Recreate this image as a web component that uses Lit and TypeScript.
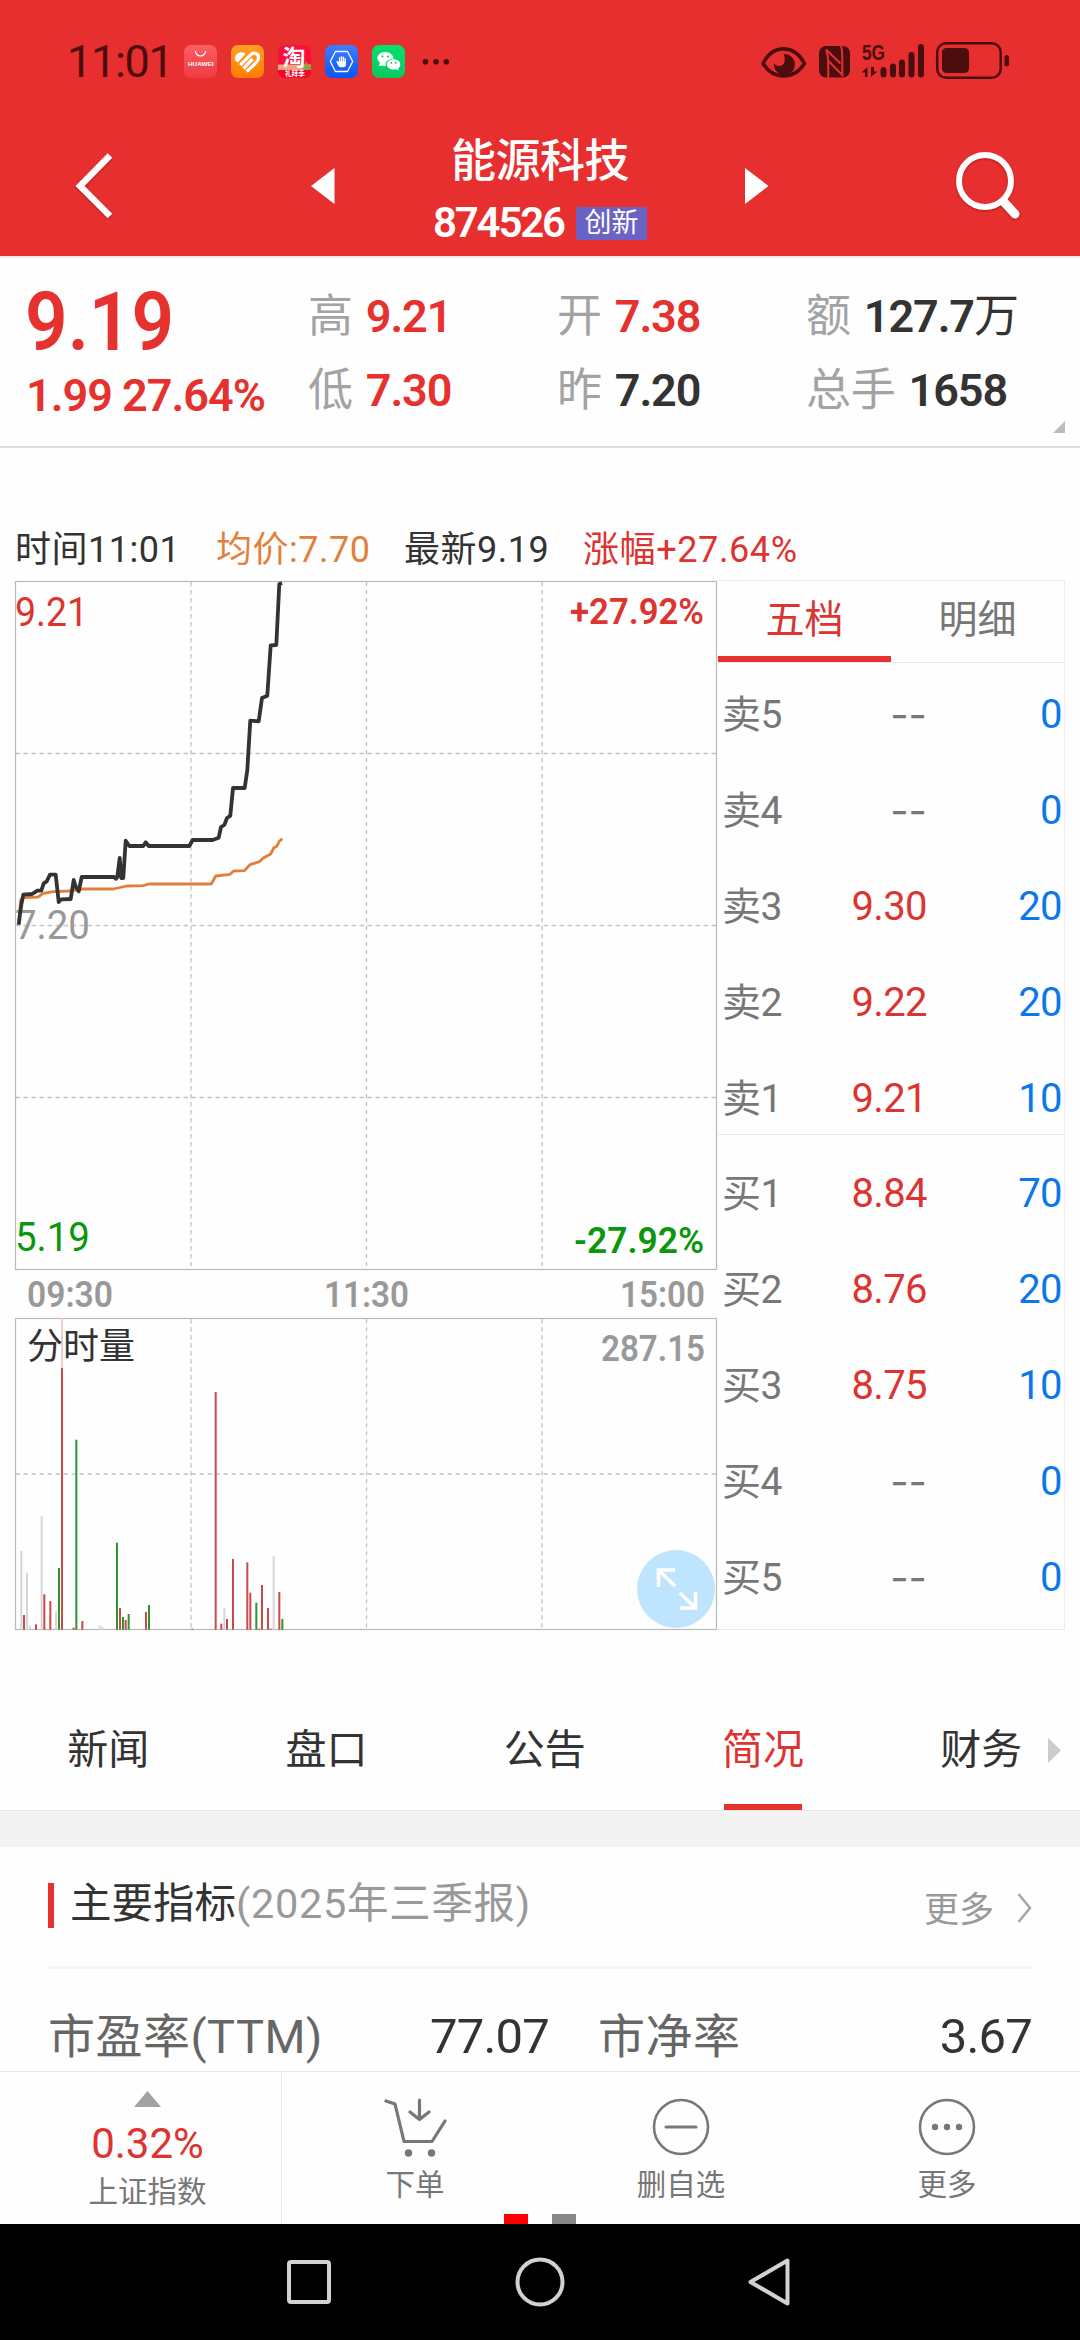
import { LitElement, html, svg, css } from "lit";
import { customElement } from "lit/decorators.js";

const SANS = css`Roboto, "Noto Sans CJK SC", sans-serif`;

type Tone = "up" | "flat" | "down";

/* Minute prices and running average, in thirds of a pixel inside the chart. */
const PRICE: [number, number][] = [
  [56, 1064], [60, 1032], [64, 1004], [70, 974], [96, 972], [104, 967], [112, 962], [124, 962],
  [131, 940], [140, 934], [150, 914], [167, 914], [176, 996], [184, 988], [212, 987], [221, 930],
  [227, 950], [236, 964], [245, 921], [342, 921], [348, 926], [352, 922], [359, 864], [364, 924],
  [370, 924], [377, 812], [388, 828], [430, 828], [437, 817], [446, 828], [568, 828], [578, 810],
  [638, 810], [656, 803], [663, 771], [673, 765], [681, 744], [691, 737], [699, 654], [734, 654],
  [742, 600], [751, 452], [776, 454], [786, 384], [802, 377], [812, 226], [829, 225], [838, 42], [846, 39],
];
const AVERAGE: [number, number][] = [
  [56, 1060], [62, 990], [72, 983], [114, 981], [130, 970], [160, 965], [206, 963], [245, 957],
  [340, 957], [380, 948], [430, 947], [446, 942], [634, 942], [647, 918], [690, 913], [701, 903],
  [733, 902], [750, 884], [778, 875], [790, 864], [812, 852], [821, 834], [830, 829], [838, 814], [847, 806],
];

/* Volume columns: x and top in thirds of a pixel, and tone. */
const VOLUME: [number, number, Tone][] = [
  [64, 1053, "flat"], [72, 1245, "up"], [81, 1118, "flat"], [90, 1277, "flat"], [108, 1273, "up"],
  [125, 948, "flat"], [133, 1183, "up"], [151, 1203, "up"], [168, 1234, "flat"], [177, 1104, "down"],
  [186, 504, "up"], [221, 1283, "up"], [229, 719, "down"], [247, 1263, "up"], [299, 1276, "flat"],
  [307, 1280, "flat"], [351, 1028, "down"], [360, 1224, "up"], [369, 1251, "down"], [377, 1260, "up"],
  [386, 1242, "down"], [438, 1236, "up"], [447, 1215, "down"], [577, 1286, "up"], [647, 576, "up"],
  [664, 1271, "up"], [673, 1224, "flat"], [681, 1257, "up"], [699, 1077, "up"], [742, 1087, "up"],
  [751, 1178, "up"], [769, 1208, "down"], [777, 1286, "up"], [786, 1155, "up"], [804, 1224, "up"],
  [812, 1286, "up"], [821, 1068, "flat"], [838, 1176, "up"], [847, 1257, "down"],
];

const toPoints = (data: [number, number][]) =>
  data.map(([x, y]) => `${(x / 3).toFixed(1)},${(y / 3).toFixed(1)}`).join(" ");

@customElement("phone-status")
class PhoneStatus extends LitElement {
  static styles = css`
    :host { display: flex; height: 83px; padding: 0 70px 0 67px; align-items: flex-end; background: #e72f2f; }
    .time { font: 400 45px/43px ${SANS}; color: #4c0d0e; width: 117px; letter-spacing: -1.3px; white-space: nowrap; }
    .apps { display: flex; gap: 14px; height: 33px; margin-bottom: 5px; flex: 1; }
    .sys { width: 250px; height: 40px; margin-bottom: 2px; flex: none; }
    .cjk { font-family: "Noto Sans CJK SC", sans-serif; font-weight: 700; }
    .latin { font-family: "Liberation Sans", sans-serif; font-weight: 700; }
    svg { display: block; overflow: visible; }
  `;
  render() {
    return html`
      <div class="time">11:01</div>
      <div class="apps">
        <svg width="33" height="33" viewBox="0 0 33 33">
          <defs><linearGradient id="h" x2="0" y2="1"><stop stop-color="#fb5f64" /><stop offset="1" stop-color="#f03a42" /></linearGradient></defs>
          <rect width="33" height="33" rx="7" fill="url(#h)" />
          <path d="M11.500 6a5 5 0 0 0 10 0" fill="none" stroke="#fff" stroke-width="1.200" />
          <text class="latin" x="4" y="21" font-size="5.600" textLength="25.500" lengthAdjust="spacingAndGlyphs" fill="#fff">HUAWEI</text>
        </svg>
        <svg width="33" height="33" viewBox="0 0 33 33">
          <defs><linearGradient id="o" x2="0" y2="1"><stop stop-color="#ffa024" /><stop offset="1" stop-color="#ff7d00" /></linearGradient></defs>
          <rect width="33" height="33" rx="7" fill="url(#o)" />
          <path d="M4.500 16C2.500 11 7 6.500 11 7.500C12.500 7.300 13.800 8 14.500 9L6.800 17.500Z" fill="#fff" />
          <path d="M9.200 20.200L19.500 10C22.500 6.500 28.500 8.500 27.300 14C26.500 17.500 21 21.500 15.800 26.500M12.500 23.500L21.500 14" fill="none" stroke="#fff" stroke-width="3.300" />
        </svg>
        <svg width="33" height="33" viewBox="0 0 33 33">
          <rect width="33" height="33" rx="7" fill="#fb0d3c" />
          <path d="M0 19.500h33v6H0z" fill="#e8a682" /><path d="M25 25l3-9 3 5 2-2v7h-8z" fill="#84a63c" />
          <text class="cjk" x="4.500" y="19.800" font-size="22" textLength="23" lengthAdjust="spacingAndGlyphs" fill="#fff">淘</text>
          <path d="M0 25h33v1a7 7 0 0 1-7 7H7a7 7 0 0 1-7-7z" fill="#f5052c" />
          <text class="cjk" x="7" y="31.300" font-size="6.600" fill="#fff">礼拜季</text>
        </svg>
        <svg width="33" height="33" viewBox="0 0 33 33">
          <defs><linearGradient id="b" x2="0" y2="1"><stop stop-color="#3f7dff" /><stop offset="1" stop-color="#0a55f5" /></linearGradient></defs>
          <rect width="33" height="33" rx="7" fill="url(#b)" />
          <path d="M10.500 6.500h12l5.200 10-5.200 10h-12l-5.200-10z" fill="none" stroke="#fff" stroke-width="1.300" stroke-linejoin="round" />
          <path d="M13.200 20.500l-2-4.300 1.200-.5 1.500 1.700v-5.200h1.300v4h.6v-5h1.400v5h.6v-4.500h1.400v4.500h.5v-3h1.300v6.300c0 1.800-1 2.700-2.600 2.700h-3c-.9 0-1.800-.6-2.200-1.700z" fill="#fff" />
        </svg>
        <svg width="33" height="33" viewBox="0 0 33 33">
          <defs><linearGradient id="w" x2="0" y2="1"><stop stop-color="#05e06e" /><stop offset="1" stop-color="#0bc863" /></linearGradient></defs>
          <rect width="33" height="33" rx="7" fill="url(#w)" />
          <path d="M7 21l.8-3.400C3 14 5.500 7.200 13 7c5 0 8.500 3 8.500 6.500-6 .5-9 4-7.500 7.500-1.500.2-2.500 0-3.500-.5z" fill="#fff" />
          <path d="M21.500 14.200c4 0 6.800 2.300 6.800 5.200 0 1.700-.9 3-2.200 4l.5 2-2.300-1.200c-5 1.300-9.400-1.400-9.400-4.800 0-2.900 2.800-5.200 6.600-5.200z" fill="#fff" />
          <g fill="#0bcf66"><circle cx="10.500" cy="11.500" r="1.100" /><circle cx="16" cy="11.500" r="1.100" /><circle cx="19.300" cy="17.900" r=".9" /><circle cx="23.800" cy="17.900" r=".9" /></g>
        </svg>
        <svg width="33" height="33" viewBox="0 0 33 33" fill="#4c0d0e"><circle cx="6.500" cy="16.700" r="2.800" /><circle cx="17" cy="16.700" r="2.800" /><circle cx="27.300" cy="16.700" r="2.800" /></svg>
      </div>
      <svg class="sys" viewBox="760 41 250 40" fill="#4c0d0e">
        <path d="M763 63.500C773 44 794 44 804.500 63.500C794 80 773 80 763 63.500Z" fill="none" stroke="#4c0d0e" stroke-width="3.600" stroke-linejoin="round" />
        <path d="M784 54a10.500 10.500 0 1 1-10 9c2 4 9 4 10.500-1c.8-3.500-.5-6-.5-8z" />
        <rect x="819" y="46" width="31" height="31.500" rx="7" />
        <path d="M828.300 78V66C828.300 58 828 54 826 49.500L840.500 63.500M841 46C842.500 50 842.300 56 842.300 62V75L829 61.500" fill="none" stroke="#e72f2f" stroke-width="2" />
        <text class="latin" x="862" y="60" font-size="22" textLength="23" lengthAdjust="spacingAndGlyphs">5G</text>
        <path d="M867.500 77V67l-6 5.500h3.500V77zM871 67v10l6.500-5.500H874V67z" />
        <g stroke="#4c0d0e" stroke-width="6" stroke-linecap="round"><path d="M883.500 70v4.500M893 66.500v8M902 62.500v12M911.500 55v19.500M921 47v27.500" /></g>
        <rect x="937.200" y="43.300" width="63.500" height="34.500" rx="9" fill="none" stroke="#4c0d0e" stroke-width="2.500" />
        <rect x="942" y="48" width="27" height="25" rx="4.500" /><rect x="1004.500" y="55" width="4.500" height="11.500" rx="2.200" />
      </svg>`;
  }
}

@customElement("stock-header")
class StockHeader extends LitElement {
  static styles = css`
    :host { display: grid; grid-template-columns: 300px 1fr 300px; height: 173px; background: #e72f2f; color: #fff; font-family: ${SANS}; }
    .side { display: flex; justify-content: space-between; align-items: center; padding-top: 32px; }
    .left { padding-left: 74px; margin-right: -36px; }
    .right { padding-right: 57px; margin-left: -36px; }
    .mid { display: flex; flex-direction: column; align-items: center; padding-top: 52px; }
    .name { font-size: 45px; line-height: 54px; font-weight: 500; letter-spacing: -0.5px; }
    .code { display: flex; align-items: center; gap: 13px; margin-top: 15px; height: 38px; }
    .num { font-size: 42px; font-weight: 600; line-height: 38px; width: 130px; letter-spacing: -2.200px; white-space: nowrap; }
    .tag { width: 71px; height: 33px; border-radius: 3px; background: #6b62c5; font-size: 27px; line-height: 32px; text-align: center; }
    svg { display: block; filter: drop-shadow(0 1px 1px rgba(90, 0, 0, 0.4)); }
    .plain { filter: none; }
  `;
  render() {
    return html`
      <div class="side left">
        <svg width="40" height="68" viewBox="0 0 40 68"><path d="M36 3.500L6 34l30 30" fill="none" stroke="#fff" stroke-width="6.500" /></svg>
        <svg class="plain" width="25" height="36" viewBox="0 0 25 36"><path d="M23.500 0v36L0 18z" fill="#fff" /></svg>
      </div>
      <div class="mid">
        <div class="name">能源科技</div>
        <div class="code"><span class="num">874526</span><span class="tag">创新</span></div>
      </div>
      <div class="side right">
        <svg class="plain" width="25" height="36" viewBox="0 0 25 36"><path d="M1 0v36l23.500-18z" fill="#fff" /></svg>
        <svg width="68" height="70" viewBox="0 0 68 70" fill="none" stroke="#fff"><circle cx="30" cy="30" r="26" stroke-width="6" /><path d="M49 51l11 12" stroke-width="9" stroke-linecap="round" /></svg>
      </div>`;
  }
}

@customElement("quote-panel")
class QuotePanel extends LitElement {
  static styles = css`
    :host { position: relative; display: grid; grid-template-columns: 281px 249px 249px 1fr; box-sizing: border-box; height: 192px; padding: 3px 0 0 27px; border-bottom: 2px solid #dedede; border-top: 2px solid #f0eaea; font-family: ${SANS}; color: #333; white-space: nowrap; }
    .big { font-size: 82px; line-height: 84px; font-weight: 600; color: #e5322e; transform: scaleX(0.910); transform-origin: 0 0; margin-top: 19px; margin-left: -2px; }
    .chg { font-size: 45px; line-height: 52px; font-weight: 600; color: #e5322e; margin: 6px 0 0 -1px; letter-spacing: -1px; }
    .col { padding-top: 19px; }
    .row { display: flex; height: 74px; line-height: 74px; font-size: 45px; gap: 13px; }
    .k { color: #a3a3a3; letter-spacing: -0.2px; }
    .v { font-weight: 600; letter-spacing: -1.1px; }
    .red { color: #e5322e; }
    .cn { font-weight: 400; letter-spacing: 0; }
    .corner { position: absolute; right: 15px; bottom: 13px; width: 12px; height: 12px; background: #bdbdbd; clip-path: polygon(100% 0, 100% 100%, 0 100%); }
  `;
  render() {
    const row = (k: string, v: string, red = false, unit = "") =>
      html`<div class="row"><span class="k">${k}</span><span class="v ${red ? "red" : ""}">${v}<span class="cn">${unit}</span></span></div>`;
    return html`
      <div><div class="big">9.19</div><div class="chg">1.99 27.64%</div></div>
      <div class="col">${row("高", "9.21", true)}${row("低", "7.30", true)}</div>
      <div class="col">${row("开", "7.38", true)}${row("昨", "7.20")}</div>
      <div class="col">${row("额", "127.7", false, "万")}${row("总手", "1658")}</div>
      <div class="corner"></div>`;
  }
}

@customElement("minute-chart")
class MinuteChart extends LitElement {
  static styles = css`
    :host { display: block; width: 718px; height: 1070px; }
    svg { display: block; font-family: ${SANS}; }
    .frame { fill: none; stroke: #b9b9b9; stroke-width: 1.200; }
    .grid { stroke: #c4c4c4; stroke-width: 1.300; stroke-dasharray: 4.500 3.500; fill: none; }
    .price { fill: none; stroke: #333; stroke-width: 3.800; stroke-linejoin: round; }
    .avg { fill: none; stroke: #e07f3a; stroke-width: 2.800; stroke-linejoin: round; }
    .lbl { font-size: 40px; }
    .b { font-size: 36.500px; font-weight: 600; }
    .cn { font-size: 36px; }
    .red { fill: #dc3431; } .green { fill: #0b960b; } .grey { fill: #999; } .dark { fill: #333; }
    .up { fill: #c9494a; } .down { fill: #2f942f; } .flat { fill: #d6d6d6; }
  `;
  render() {
    const bar = ([x, y, tone]: [number, number, Tone]) =>
      svg`<rect class=${tone} x=${(x / 3 - 1).toFixed(2)} y=${(630 + y / 3).toFixed(2)} width="2" height=${((1289 - y) / 3).toFixed(2)} />`;
    const text = (t: string, x: number, y: number, w: number, cls: string) =>
      svg`<text class=${cls} x=${x} y=${y} textLength=${w} lengthAdjust="spacingAndGlyphs">${t}</text>`;
    return html`<svg width="718" height="1070" viewBox="0 0 718 1070">
      <path class="grid" d="M15.500 183.500H717M15.500 355.500H717M15.500 527.500H717M191 12V696M366.500 12V696M542 12V696" />
      <path class="grid" d="M15.500 904H717M191 749V1058M366.500 749V1058M542 749V1058" />
      <rect class="frame" x="15.500" y="11.500" width="701" height="688" />
      <rect class="frame" x="15.500" y="748.500" width="701" height="311" />
      <polyline class="avg" points=${toPoints(AVERAGE)} />
      ${text("9.21", 15, 55.500, 73, "lbl red")} ${text("7.20", 15, 368.500, 75, "lbl grey")} ${text("5.19", 15, 681, 75, "lbl green")}
      <polyline class="price" points=${toPoints(PRICE)} />
      <rect x="61" y="748" width="2" height="50" fill="#eecccc" />
      ${VOLUME.map(bar)}
      ${text("+27.92%", 570, 54, 134, "b red")} ${text("-27.92%", 574, 682.500, 130, "b green")}
      ${text("09:30", 27, 737, 86, "b grey")} ${text("11:30", 324, 737, 85, "b grey")} ${text("15:00", 620, 737, 85, "b grey")}
      ${text("分时量", 27, 789, 108, "cn dark")} ${text("287.15", 601, 791, 104, "b grey")}
      <circle cx="676" cy="1019" r="39" fill="#bfe4fe" />
      <path d="M675 1016L658.500 1000M658.500 1017V1000H675M680 1023L695.500 1038M680 1038H695.500V1022" fill="none" stroke="#fff" stroke-width="3.600" />
    </svg>`;
  }
}

@customElement("order-book")
class OrderBook extends LitElement {
  static styles = css`
    :host { display: block; box-sizing: border-box; width: 347px; height: 1050px; margin-top: 10px; border: 1px solid #ececec; border-left: 0; font-family: ${SANS}; font-size: 40px; color: #777; }
    .tabs { display: grid; grid-template-columns: 173px 1fr; height: 81px; border-bottom: 1px solid #ececec; }
    .tab { text-align: center; line-height: 79px; font-size: 39px; }
    .on { color: #dc3431; box-shadow: inset 0 -6px #e5322e; }
    .side { box-sizing: border-box; }
    .asks { height: 472px; padding-top: 4px; border-bottom: 1px solid #ececec; }
    .bids { padding-top: 11px; }
    .row { display: grid; grid-template-columns: 60px 145px 1fr; height: 96px; line-height: 96px; padding: 0 2px 0 4px; white-space: nowrap; }
    .row span + span { text-align: right; }
    .k { font-size: 39px; letter-spacing: -0.5px; }
    .p { color: #dc3431; letter-spacing: -0.6px; }
    .none { color: #777; font-family: Inter, sans-serif; letter-spacing: 0; }
    .q { color: #0b78ea; letter-spacing: -0.6px; }
  `;
  render() {
    const row = ([k, p, q]: string[]) =>
      html`<div class="row"><span class="k">${k}</span><span class="p ${p === "--" ? "none" : ""}">${p}</span><span class="q">${q}</span></div>`;
    const asks = [["卖5", "--", "0"], ["卖4", "--", "0"], ["卖3", "9.30", "20"], ["卖2", "9.22", "20"], ["卖1", "9.21", "10"]];
    const bids = [["买1", "8.84", "70"], ["买2", "8.76", "20"], ["买3", "8.75", "10"], ["买4", "--", "0"], ["买5", "--", "0"]];
    return html`
      <div class="tabs"><div class="tab on">五档</div><div class="tab">明细</div></div>
      <div class="side asks">${asks.map(row)}</div>
      <div class="side bids">${bids.map(row)}</div>`;
  }
}

@customElement("stock-details")
class StockDetails extends LitElement {
  static styles = css`
    :host { display: block; height: 381px; overflow: hidden; font-family: ${SANS}; color: #333; white-space: nowrap; }
    .tabs { display: flex; height: 120px; margin-right: -10px; position: relative; }
    .tab { width: 218.300px; flex: none; font-size: 41px; line-height: 121px; text-align: center; display: flex; justify-content: center; }
    .tab:first-child { margin-left: -1px; }
    .tab span { height: 120px; }
    .on { color: #dc3431; }
    .on span { box-shadow: inset 0 -6px #e5322e; width: 78px; display: flex; justify-content: center; }
    .next { position: absolute; right: 29px; top: 48px; width: 13px; height: 25px; background: #cbcbcb; clip-path: polygon(0 0, 100% 50%, 0 100%); }
    .band { height: 37px; background: #f3f3f3; box-shadow: inset 0 1px #e6e6e6; }
    .card { padding: 0 48px; }
    .head { display: flex; align-items: center; height: 119px; border-bottom: 3px solid #f4f4f4; }
    .mark { width: 6px; height: 45px; background: #e5322e; margin: 0 16px 2px 0; }
    .title { font-size: 41.500px; flex: 1; line-height: 50px; margin-bottom: 5px; }
    .title i { font-style: normal; color: #999; letter-spacing: 0.7px; }
    .more { font-size: 35px; color: #999; margin: 0 23px 0 0; }
    .metrics { display: grid; grid-template-columns: 501px 1fr; column-gap: 49px; padding-top: 39px; line-height: 58px; }
    .metric { display: flex; justify-content: space-between; font-size: 47px; color: #666; }
    .metric b { font-weight: 400; color: #333; font-size: 49px; letter-spacing: -0.8px; }
    .metric span { letter-spacing: 0.5px; }
  `;
  render() {
    return html`
      <div class="tabs">
        ${["新闻", "盘口", "公告", "简况", "财务"].map((t) => html`<div class="tab ${t === "简况" ? "on" : ""}"><span>${t}</span></div>`)}
        <div class="next"></div>
      </div>
      <div class="band"></div>
      <div class="card">
        <div class="head">
          <div class="mark"></div>
          <div class="title">主要指标<i>(2025年三季报)</i></div>
          <div class="more">更多</div>
          <svg width="15" height="32" viewBox="0 0 15 32"><path d="M1.500 3L13 17 1.500 31" fill="none" stroke="#a6a6a6" stroke-width="2.500" /></svg>
        </div>
        <div class="metrics">
          <div class="metric"><span>市盈率(TTM)</span><b>77.07</b></div>
          <div class="metric"><span>市净率</span><b>3.67</b></div>
        </div>
      </div>`;
  }
}

@customElement("action-bar")
class ActionBar extends LitElement {
  static styles = css`
    :host { position: relative; display: grid; grid-template-columns: 282px 1fr 1fr 1fr; box-sizing: border-box; height: 153px; border-top: 1px solid #e6e6e6; background: #fefefe; font-family: ${SANS}; color: #777; }
    .index { display: flex; flex-direction: column; align-items: center; border-right: 1px solid #e9e9e9; padding: 19px 0 0 14px; }
    .tri { width: 27px; height: 16px; background: #a2a2a2; clip-path: polygon(50% 0, 100% 100%, 0 100%); }
    .pct { font-size: 42px; line-height: 48px; color: #dc3431; margin-top: 13px; letter-spacing: 0; }
    .lbl { font-size: 29.500px; line-height: 36px; }
    .index .lbl { margin-top: 6px; }
    .act { display: flex; flex-direction: column; align-items: center; padding-top: 24px; gap: 9px; }
    svg { display: block; fill: none; stroke: #777; stroke-width: 3; }
    .dot { fill: #777; stroke: none; }
    .page { position: absolute; bottom: 0; width: 24px; height: 10px; background: #888; left: 552px; }
    .cur { left: 504px; background: #fe0000; }
  `;
  render() {
    return html`
      <div class="index"><div class="tri"></div><div class="pct">0.32%</div><div class="lbl">上证指数</div></div>
      <div class="act">
        <svg width="64" height="62" viewBox="0 0 64 62" stroke-linecap="round" stroke-linejoin="round">
          <path d="M3 5l9 3 9 37.500h28L62 25M36.500 4v19M27 16l9.500 7.500L46 16" stroke-width="3.200" />
          <circle class="dot" cx="25.500" cy="57" r="3.700" /><circle class="dot" cx="48.500" cy="57" r="3.700" />
        </svg>
        <div class="lbl">下单</div>
      </div>
      <div class="act">
        <svg width="62" height="62" viewBox="0 0 62 62"><circle cx="31" cy="31" r="27" stroke-width="2.600" /><path d="M16 31h30" stroke-linecap="round" /></svg>
        <div class="lbl">删自选</div>
      </div>
      <div class="act">
        <svg width="62" height="62" viewBox="0 0 62 62"><circle cx="31" cy="31" r="27" stroke-width="2.600" /><g class="dot"><circle cx="19" cy="31" r="3.200" /><circle cx="31" cy="31" r="3.200" /><circle cx="43" cy="31" r="3.200" /></g></svg>
        <div class="lbl">更多</div>
      </div>
      <div class="page cur"></div><div class="page"></div>`;
  }
}

@customElement("app-root")
class AppRoot extends LitElement {
  static styles = css`
    :host { display: block; width: 1080px; height: 2340px; overflow: hidden; background: #fefefe; }
    .info { display: flex; height: 122px; box-sizing: border-box; padding: 80px 0 0 15px; font: 36px/44px ${SANS}; color: #333; white-space: nowrap; }
    .info span { letter-spacing: 0.5px; }
    .w1 { width: 201px; } .w2 { width: 188px; } .w3 { width: 179px; }
    .avg { color: #e2813b; } .info .red { color: #dc3431; letter-spacing: 0.6px; }
    .main { display: flex; margin-bottom: 50px; }
    .keys { display: flex; height: 116px; background: #000; justify-content: center; align-items: center; }
    .keys svg { display: block; fill: none; stroke: #d2d2d2; stroke-width: 4; }
  `;
  render() {
    return html`
      <phone-status></phone-status>
      <stock-header></stock-header>
      <quote-panel></quote-panel>
      <div class="info">
        <span class="w1">时间11:01</span><span class="w2 avg">均价:7.70</span><span class="w3">最新9.19</span><span class="red">涨幅+27.64%</span>
      </div>
      <div class="main"><minute-chart></minute-chart><order-book></order-book></div>
      <stock-details></stock-details>
      <action-bar></action-bar>
      <div class="keys">
        <svg width="520" height="60" viewBox="280 2252 520 60">
          <rect x="289" y="2262" width="40" height="40" rx="2" /><circle cx="540" cy="2282" r="22.500" />
          <path d="M787.500 2260.500L750.500 2282l37 21.500z" stroke-linejoin="round" />
        </svg>
      </div>`;
  }
}
